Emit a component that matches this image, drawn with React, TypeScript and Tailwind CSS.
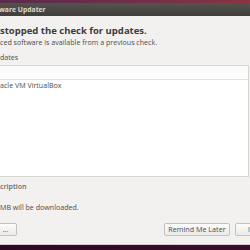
const font = { fontFamily: '"Open Sans", "Noto Sans", sans-serif' };

export default function App() {
  return (
    <div
      className="flex h-[250px] w-[250px] flex-col overflow-hidden bg-[#f2f1f0]"
      style={font}
    >
      <div className="h-[3px] bg-gradient-to-r from-[#5a2b4c] via-[#6e2f4a] to-[#8c3342]" />
      <div className="flex h-[13px] items-center bg-gradient-to-b from-[#55534e] to-[#3f3e3a]">
        <span className="-ml-[1px] text-[6.8px] font-bold leading-[13px] text-[#dfdbd2]">
          ware Updater
        </span>
      </div>

      <div className="flex flex-1 flex-col pt-[9px]">
        <p className="h-[12px] text-[9.5px] font-bold leading-[12px] text-[#3c3c3c]">
          stopped the check for updates.
        </p>
        <p className="h-[10px] text-[7.1px] leading-[10px] text-[#4c4c4c]">
          ced software is available from a previous check.
        </p>
        <p className="mt-[5px] h-[10px] text-[7.1px] leading-[10px] text-[#4c4c4c]">
          dates
        </p>

        <div className="mt-[3px] mr-[1px] flex h-[112px] flex-col border-t border-r border-b border-[#d8d6d2] bg-white">
          <div className="h-[14px] border-b border-[#e4e2df] bg-[#fbfbfb]" />
          <p className="h-[10px] text-[7.1px] leading-[10px] text-[#4c4c4c]">
            acle VM VirtualBox
          </p>
        </div>

        <p className="mt-[4px] h-[10px] text-[7.1px] font-semibold leading-[10px] text-[#6a6a6a]">
          cription
        </p>
        <p className="mt-[11px] h-[10px] text-[7.1px] leading-[10px] text-[#4c4c4c]">
          MB will be downloaded.
        </p>

        <div className="mt-[11px] flex h-[13px] items-stretch">
          <div className="-ml-[20px] flex w-[37px] items-center justify-end rounded-[2px] border border-[#c4c2bd] bg-gradient-to-b from-[#fbfbfa] to-[#ecebe9] pr-[8px] text-[7.1px] leading-none text-[#4c4c4c]">
            ...
          </div>
          <div className="ml-auto flex w-[66px] items-center justify-center rounded-[2px] border border-[#c4c2bd] bg-gradient-to-b from-[#fbfbfa] to-[#ecebe9] text-[7.2px] leading-none text-[#4c4c4c]">
            Remind Me Later
          </div>
          <div className="-mr-[30px] ml-[5px] flex w-[45px] items-center rounded-[2px] border border-[#c4c2bd] bg-gradient-to-b from-[#fbfbfa] to-[#ecebe9] pl-[12px] text-[7.1px] leading-none text-[#4c4c4c]">
            I
          </div>
        </div>
      </div>

      <div className="h-[1px] bg-[#d9c9d2]" />
      <div className="h-[5px] bg-gradient-to-r from-[#2c0b22] to-[#3a0d27]" />
    </div>
  );
}
